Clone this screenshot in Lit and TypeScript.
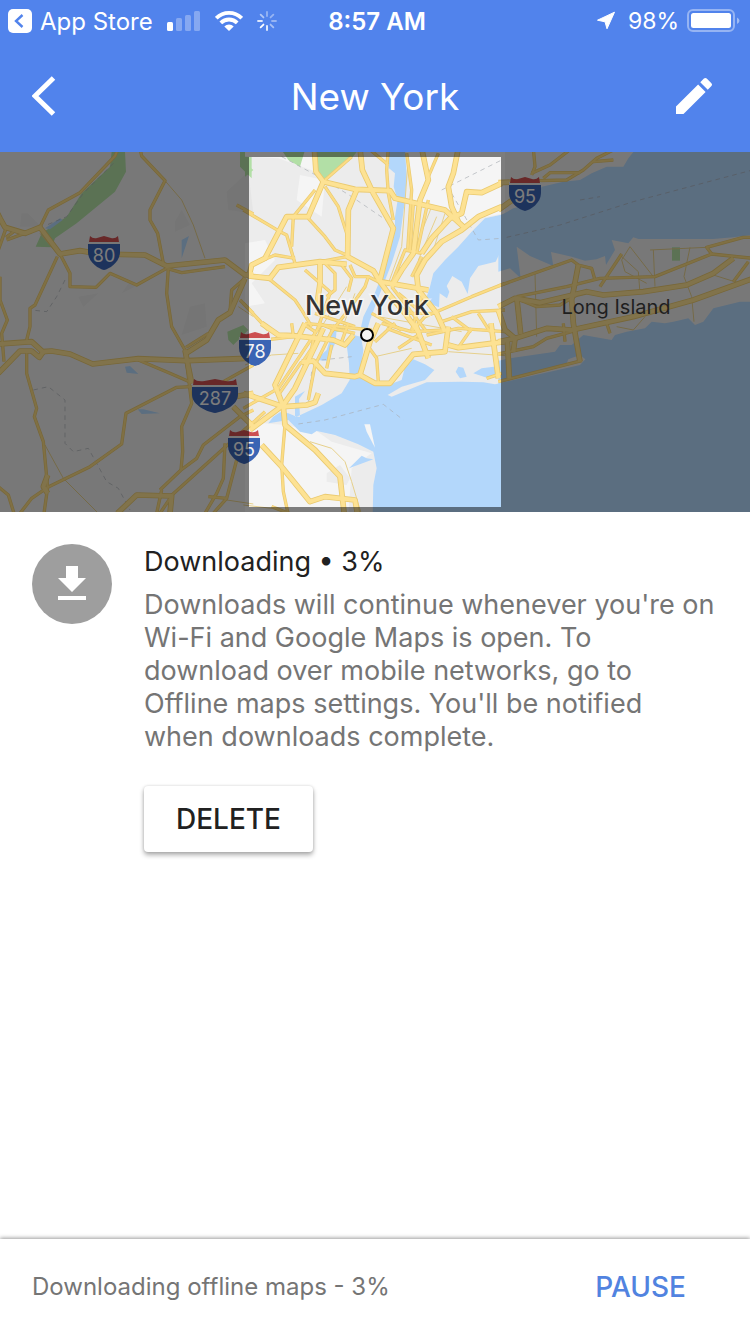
import { LitElement, html, svg, css } from "lit";
import { customElement, property } from "lit/decorators.js";

type Tile = { x: number; y: number; major: string[]; medium: string[]; thin: string[]; dash: string[] };

/* Road lines, grouped by map tile; each tile is drawn at three units per pixel. */
const TILES: Tile[] = [
  {
    x: 0, y: -2,
    major: [
      "-10,185 0,205 15,232 75,250 120,232 180,312 240,302 300,312 435,315 500,348 675,330 735,375 760,372",
      "-5,582 95,575 128,605 155,603 210,612 278,642 415,626 560,632 720,626 760,624",
      "-5,670 60,603 95,603 118,622 130,605",
      "352,1090 410,1035 515,1038 510,1090",
      "735,385 690,488 655,510 620,570 558,610",
      "555,600 575,700", "705,740 760,730", "700,770 760,830", "143,975 130,1010 143,1030",
    ],
    medium: [
      "120,232 145,180 240,128 345,18 355,-5",
      "420,-5 425,18 495,92 450,180 450,210 473,250 490,340",
      "180,312 210,370 210,410 288,412 330,370 410,405 500,355 545,368 675,350",
      "172,320 105,465 90,475 90,530 80,570",
      "505,355 500,430 515,530 555,600 575,760 545,830 548,905 543,960",
      "80,610 80,670 110,775 103,800 130,875 143,1012 132,1090",
      "143,1012 270,950 365,882 378,790 530,712 575,710",
      "415,630 510,670 575,698", "670,695 760,645",
      "480,1020 543,960 590,925 610,885 720,800 760,780",
      "510,1040 760,815", "470,1090 485,1020",
      "60,1090 95,1045 143,1012", "-5,1010 25,1035 42,1090",
      "0,380 0,450 22,510 5,550 12,635", "18,235 -5,300", "20,270 80,248", "18,262 40,246",
      "675,880 670,985 650,1030 615,1090", "710,930 680,1045 640,1090", "625,1040 680,1045",
      "690,485 695,420 735,385", "720,450 760,490", "710,165 760,192", "558,592 625,550", "480,1090 510,1045",
    ],
    thin: ["495,92 545,150 580,225 615,325", "135,885 190,985 295,1090", "680,1050 760,1062", "715,470 760,500", "120,250 170,310"],
    dash: ["195,390 170,440 140,485 95,480", "100,720 145,710 195,750 195,880 220,905 265,895 290,940 320,995 355,1015 390,1080", "340,40 250,130 200,200 140,225"],
  },
  {
    x: 245, y: -2,
    major: [
      "208,-5 213,65 235,95 330,118 435,122 450,145 600,180 655,230",
      "235,95 190,200 125,200 60,325 20,345 12,378 75,385 100,352 225,335 305,343",
      "345,-5 352,60 385,130 445,235 405,390",
      "335,120 310,180 308,320 385,362 405,395 550,420",
      "530,-5 550,90 525,150 505,310 470,360 440,410",
      "770,170 700,200 650,240 590,275 540,330 515,375 520,420 575,490 600,545",
      "770,100 710,128 665,125 650,190 615,205 560,265 530,310",
      "640,-5 625,70 610,110 620,170 640,215",
      "405,395 430,430 480,490 520,545", "225,335 225,400 215,470",
    ],
    medium: [
      "320,20 240,90", "430,-5 425,60 430,130 445,210", "370,-5 430,45", "485,10 500,120 488,300", "505,160 495,300",
      "240,110 280,170 305,250 305,320 225,335", "-5,180 105,245 125,255 150,340", "210,120 145,200 140,290",
      "190,205 240,260 270,300 305,315", "20,345 90,315 150,325", "70,385 150,450 170,480 200,530",
      "240,340 270,370 270,420 245,440", "290,345 320,385 310,425", "180,360 260,430", "315,345 330,380 370,380 360,410 310,480 260,545",
      "780,400 680,440 540,500", "780,480 680,485 590,515", "-5,460 70,540", "580,10 550,80", "530,310 480,300 440,400",
      "500,380 530,320", "370,380 400,395", "540,500 500,545", "480,490 580,490", "530,440 500,540", "440,410 545,545",
      "380,490 470,540", "700,490 735,545", "620,500 680,545", "550,150 515,310", "255,430 215,545",
      "180,520 380,540", "210,490 330,530", "460,430 520,480",
    ],
    thin: ["560,170 500,320", "575,200 520,330", "490,20 470,290 430,400", "600,190 565,300", "400,500 650,545", "305,410 230,530", "330,430 290,540"],
    dash: ["110,20 240,90 320,140 430,215", "590,120 770,30", "620,130 700,270 770,265"],
  },
  {
    x: 245, y: 173,
    major: [
      "50,-5 100,30 145,32 265,45 300,60 325,30",
      "180,-5 90,180 115,245 120,300 210,375 285,455 298,570",
      "-5,205 115,245 185,240 210,232 220,205", "235,10 150,190 115,240 15,315",
      "170,112 205,108 240,145 330,155 345,150 375,50 400,-5",
      "345,150 390,175 435,175 505,88 600,80 610,5", "510,-5 550,100",
      "610,60 640,68 780,50", "738,-5 760,160",
      "50,360 110,425 195,530 240,515 330,525 338,570",
    ],
    medium: [
      "270,0 210,120 190,225", "120,300 110,420 115,500 130,570", "370,65 395,100 400,170", "390,50 450,-5",
      "460,70 520,30", "-5,250 100,190 230,-5", "-5,320 60,260", "140,-5 145,32", "80,545 145,570",
      "145,35 60,45 0,40", "200,70 210,20 180,0", "200,70 170,115", "330,25 260,10 220,-5", "170,110 100,210",
      "410,-5 500,20 600,15", "545,30 640,10 780,20", "425,10 560,60", "640,68 680,10", "245,130 260,60", "725,160 770,145", "310,-5 290,50",
    ],
    thin: ["195,350 260,370 300,410 320,470 350,570", "610,80 780,92", "0,120 80,90 160,85", "390,95 500,70", "-5,540 80,550"],
    dash: ["160,297 240,285 415,238 475,285", "190,230 200,140", "230,105 320,95"],
  },
  {
    x: 500, y: -2,
    major: [
      "-5,470 45,445 120,458 260,425 310,435 430,425 560,405 640,370 700,325",
      "-5,575 45,565 140,535 215,540 400,500 580,450 760,385",
      "235,345 215,450 220,520 240,635", "50,440 62,552", "-5,480 15,540 45,565 40,605", "22,570 28,685", "-5,180 40,148", "-5,98 70,95",
    ],
    medium: [
      "95,70 150,45 215,-5", "100,-5 105,50 95,75", "115,92 200,90 250,60 290,25 350,-5", "130,85 150,68 240,68",
      "-5,408 215,330 235,345 275,355 285,390", "60,450 110,470 180,465 230,435", "50,440 200,410 300,385 465,380 635,312 620,292 730,262 760,262",
      "635,312 760,325", "300,410 365,312", "-5,612 100,590 140,565 215,545", "190,520 195,575", "320,520 330,550",
      "-5,695 245,632", "745,335 700,395", "280,35 340,30",
    ],
    thin: ["390,290 365,330 375,365 440,400", "390,290 460,380", "460,300 465,410", "570,292 552,380 575,440 582,515", "450,300 620,292", "105,370 110,560", "640,375 720,400", "350,530 400,540 435,500", "360,315 415,365 420,430"],
    dash: ["20,262 180,225 400,155 750,62", "240,150 300,140"],
  },
];

const at = (x: number, y: number) => `translate(${x} ${y}) scale(.333333)`;

const roads = (kind: "major" | "medium" | "thin" | "dash", cls: string) =>
  TILES.map((t) => svg`<g class=${cls} transform=${at(t.x, t.y)}>${t[kind].map((p) => svg`<polyline points=${p}></polyline>`)}</g>`);

const shield = (x: number, y: number, label: string, w = 32) => {
  const h = w / 2;
  const q = w / 4;
  return svg`
  <g transform="translate(${x} ${y})">
    <path fill="#e9e9e9" d="M${-h} 5H${h}V9H${-h}Z"></path>
    <path fill="#cc4f50" d="M${-h + 1} 6L${-h + 2} 0Q${-h + 5} 3 ${-q + 1} 2L0 0L${q - 1} 2Q${h - 5} 3 ${h - 2} 0L${h - 1} 6Z"></path>
    <path fill="#3a64b4" d="M${-h} 8H${h}V16C${h} 26 ${w / 6} 33 0 34C${-w / 6} 33 ${-h} 26 ${-h} 16Z"></path>
    <text class="route" x="0" y="26">${label}</text>
  </g>`;
};

@customElement("region-map")
export class RegionMap extends LitElement {
  static styles = css`
    :host { display: block; height: 360px; overflow: hidden; background: #797979; }
    svg { display: block; width: 100%; height: 100%; }
    polyline { fill: none; stroke-linejoin: round; }
    .major-case { stroke: #eaca70; stroke-width: 17; }
    .major { stroke: #fde293; stroke-width: 12; }
    .medium-case { stroke: #eaca70; stroke-width: 10; }
    .medium { stroke: #fbdc85; stroke-width: 6; }
    .thin { stroke: #e6d08c; stroke-width: 3; }
    .dash { stroke: #a9adb3; stroke-width: 2; stroke-dasharray: 14 12; }
    .water { fill: #b3d7fb; }
    .park { fill: #b2dfa6; }
    .pale { fill: #f5f5f5; }
    .grey { fill: #e5e5e5; }
    .land { fill: #ececec; }
    text { font-family: Inter, "Liberation Sans", sans-serif; }
    .route { font-size: 18px; fill: #f4f4f4; text-anchor: middle; }
    .city { font-size: 27px; font-weight: 500; fill: #333; stroke: #fff; stroke-width: 3; stroke-opacity: .55; paint-order: stroke; text-anchor: middle; }
    .area { font-size: 20px; fill: #1f1f1f; text-anchor: middle; }
  `;

  render() {
    return html`<svg viewBox="0 0 750 360" preserveAspectRatio="xMidYMid slice" role="img" aria-label="Map of New York">
      <rect class="land" width="750" height="360"></rect>
      <g transform=${at(0, -2)}>
        <path class="grey" d="M65 190h18l40 40H60zM525 215l20-35 25 45-45 20zM235 440l60-10-45 40zM365 430l25-35 15 15zM570 470l45-10 5 70-75 25zM680 125l65-60 15 125-75-10z"></path>
        <path class="park" d="M335 5H375L378 65 345 125 230 220 165 265 155 292 107 290 125 250 200 200 245 130 330 50ZM720 0H755V85L720 50ZM682 545L730 525 745 540 700 585 685 570Z"></path>
        <path class="water" d="M135 235L180 205 188 210 150 238ZM545 270L567 258 545 325ZM375 650L390 648 415 672 380 668ZM413 778H430L480 790 425 792Z"></path>
      </g>
      <g transform=${at(245, -2)}>
        <path class="pale" d="M165 75L240 90 230 200 155 150ZM0 0H210L213 65 100 25 0 20ZM480 0H780V190L700 205 650 225 600 180 550 165 500 150ZM0 280L60 270 90 330 20 400 60 460 0 470Z"></path>
        <path class="park" d="M215 0H340L320 25 240 92 213 65ZM110 0H180L165 50 130 30ZM0 40L25 60 0 80ZM260 530h30v15h-30z"></path>
        <path class="water" d="M430 0L432 55 450 70 446 110 458 150 450 200 450 240 430 310 405 390 385 440 355 500 345 545H365L375 510 405 430 440 340 465 260 480 150 485 80 480 0ZM790 190L720 205 680 245 640 290 600 330 565 370 555 410 540 455 582 472 584 430 606 445 613 425 605 408 622 378 650 395 668 432 675 385 700 348 752 335 765 308 790 310Z"></path>
      </g>
      <g transform=${at(245, 173)}>
        <path class="pale" d="M0 290L120 300 215 318 270 330 385 380 320 430 310 570H0Z"></path>
        <path class="land" d="M215 318L290 335 385 375 380 385 260 350ZM245 445l40-25 30 40-10 20-60-10z"></path>
        <path class="water" d="M790 170L750 178 715 172 650 170 545 172 440 215 428 210 470 185 540 165 568 135 540 118 505 103 480 125 470 165 430 180 390 180 345 155 355 75 348 35 325 30 305 60 312 115 314 165 290 205 230 240 155 275 130 265 105 262 85 275 70 295 130 285 165 320 200 328 215 318 270 330 340 358 385 380 395 430 385 480 383 570H790ZM262 20L275 10 272 50 258 85 250 108 212 105 245 75ZM640 125L655 128 665 155 645 160 632 140ZM685 145L710 130 790 120V150L730 160ZM150 275L150 215 180 198 162 222 165 275Z"></path>
        <path class="pale" d="M358 298H375L390 368 365 320Z"></path>
        <path class="water" d="M312 430L350 392 365 400 385 403Z"></path>
      </g>
      <g transform=${at(500, -2)}>
        <path class="water" d="M405 0L385 25 370 50 320 50 275 70 240 90 190 95 125 110 100 160 40 175-5 200V365L30 355 62 385 50 290 90 318 160 348 153 306 215 320 255 332 290 328 315 318 318 345 345 300 335 270 385 280 400 262 415 267H640L700 262 755 255V0ZM755 455H720L640 475 610 515 585 525 565 505 520 515 495 520 455 515 435 535 380 545 345 555 335 570 250 555 215 585 180 585 165 605 30 625-5 632V1100H755Z"></path>
        <path class="land" d="M-5 700L200 640 205 628 240 615 256 628 240 645Z"></path>
        <path class="park" d="M516 292H540V332H516Z"></path>
      </g>
      ${roads("dash", "dash")} ${roads("thin", "thin")}
      ${roads("medium", "medium-case")} ${roads("major", "major-case")}
      ${roads("medium", "medium")} ${roads("major", "major")}
      ${shield(104, 84, "80")} ${shield(255, 180, "78")} ${shield(215, 227, "287", 46)}
      ${shield(244, 278, "95")} ${shield(525, 25, "95")}
      <text class="city" x="367" y="163">New York</text>
      <circle cx="367" cy="183" r="6" fill="#f4f4f4" stroke="#000" stroke-width="2"></circle>
      <path fill="#000" fill-opacity=".49" fill-rule="evenodd" d="M-2000 0H3000V360H-2000ZM249 5V355H501V5Z"></path>
      <text class="area" x="616" y="162">Long Island</text>
    </svg>`;
  }
}

@customElement("app-root")
export class AppRoot extends LitElement {
  @property() place = "New York";
  @property({ type: Number }) progress = 3;

  static styles = css`
    :host {
      display: flex; flex-direction: column; min-height: 100vh; background: #fff; color: #212121;
      font-family: Inter, "Liberation Sans", sans-serif;
    }
    header { background: #5183ec; color: #fff; }
    svg { display: block; flex: none; }
    h1, h2, p { margin: 0; font-weight: 400; }
    button { font: inherit; color: inherit; border: 0; background: none; padding: 0; cursor: pointer; }
    .status { display: grid; grid-template-columns: 1fr auto 1fr; align-items: center; box-sizing: border-box; height: 40px; padding: 2px 10px 0 8px; font-size: 24px; }
    .left, .right { display: flex; align-items: center; }
    .right { justify-content: flex-end; gap: 8px; font-size: 23px; }
    .back-app { display: flex; align-items: center; gap: 8px; color: inherit; text-decoration: none; }
    .signal, .wifi, .spinner { margin-left: 14px; }
    .location { margin-right: 4px; }
    .time { padding-left: 6px; font-weight: 600; }
    .bar { display: grid; grid-template-columns: 1fr auto 1fr; align-items: center; height: 112px; padding: 0 32px; }
    .bar h1 { font-size: 37px; }
    .edit { justify-self: end; }
    .content { flex: 1; display: flex; align-items: flex-start; gap: 32px; padding: 32px; }
    .badge { display: grid; place-items: center; flex: none; width: 80px; height: 80px; border-radius: 50%; background: #9e9e9e; }
    .details { flex: 1; }
    .details h2 { font-size: 27px; line-height: 36px; }
    .details p { margin-top: 8px; font-size: 27px; line-height: 33px; color: #757575; }
    .delete { display: block; margin-top: 33px; height: 66px; padding: 0 32px; font-size: 28px; font-weight: 500; border-radius: 4px; background: #fff; box-shadow: 0 3px 5px rgba(0,0,0,.32), 0 0 3px rgba(0,0,0,.14); }
    footer { display: flex; align-items: center; justify-content: space-between; height: 95px; padding: 0 64px 0 32px; box-shadow: 0 -1px 4px rgba(0,0,0,.4); }
    footer p { font-size: 24px; color: #757575; }
    .pause { font-size: 28px; font-weight: 500; color: #5183e0; }
  `;

  render() {
    return html`
      <header>
        <div class="status">
          <div class="left">
            <a class="back-app" href="#">
              <svg width="24" height="24" viewBox="0 0 24 24"><rect width="24" height="24" rx="5" fill="#fff"></rect><path d="M14.500 6L8 12l6.500 6" fill="none" stroke="#5183ec" stroke-width="2.400"></path></svg>
              App Store
            </a>
            <svg class="signal" width="34" height="20" viewBox="0 0 34 20" fill="#fff"><rect y="11" width="6" height="9" rx="1.500"></rect><g opacity=".3"><rect x="9" y="7" width="6" height="13" rx="1.500"></rect><rect x="18" y="4" width="6" height="16" rx="1.500"></rect><rect x="27" width="6" height="20" rx="1.500"></rect></g></svg>
            <svg class="wifi" width="28" height="20" viewBox="0 0 28 20"><g fill="none" stroke="#fff" stroke-width="3.800"><path d="M1.300 7.200a18 18 0 0 1 25.400 0"></path><path d="M5.800 11.900a11.600 11.600 0 0 1 16.400 0"></path></g><path fill="#fff" d="M9.300 15.400a6.700 6.700 0 0 1 9.400 0L14 20z"></path></svg>
            <svg class="spinner" width="20" height="20" viewBox="-10 -10 20 20" stroke="#fff" stroke-width="1.800" stroke-linecap="round">
              ${[0.4, 0.4, 0.4, 0.5, 0.9, 1, 0.8, 0.55].map((o, i) => svg`<path d="M0-5V-9" transform="rotate(${i * 45})" opacity=${o}></path>`)}
            </svg>
          </div>
          <span class="time">8:57 AM</span>
          <div class="right">
            <svg class="location" width="20" height="20" viewBox="0 0 20 20"><path fill="#fff" stroke="#fff" stroke-linejoin="round" d="M18.500 1.200L11 17.800 9 10.800 1.500 9.200Z"></path></svg>
            <span>98%</span>
            <svg width="53" height="24" viewBox="0 0 53 24"><rect x="1" y="1" width="46" height="21" rx="5" fill="none" stroke="#fff" stroke-opacity=".4" stroke-width="2"></rect><rect x="4" y="4" width="40" height="15" rx="2.500" fill="#fff"></rect><path d="M50 8.500q5 3 0 6.500z" fill="#fff" opacity=".45"></path></svg>
          </div>
        </div>
        <div class="bar">
          <button aria-label="Back"><svg width="24" height="40" viewBox="0 0 24 40"><path d="M21.500 2L3 20l18.500 18" fill="none" stroke="#fff" stroke-width="5"></path></svg></button>
          <h1>${this.place}</h1>
          <button class="edit" aria-label="Edit"><svg width="48" height="48" viewBox="0 0 24 24"><path fill="#fff" d="M3 17.250V21h3.750L17.810 9.940l-3.750-3.750L3 17.250zM20.710 7.040a1 1 0 0 0 0-1.410l-2.340-2.340a1 1 0 0 0-1.410 0l-1.830 1.830 3.750 3.750 1.830-1.830z"></path></svg></button>
        </div>
      </header>
      <region-map></region-map>
      <main class="content">
        <div class="badge"><svg width="28" height="36" viewBox="0 0 28 36" fill="#fff"><path d="M8 0H20V12H28L14 26 0 12H8Z"></path><rect y="30" width="28" height="4"></rect></svg></div>
        <section class="details">
          <h2>Downloading • ${this.progress}%</h2>
          <p>Downloads will continue whenever you're on Wi-Fi and Google Maps is open. To download over mobile networks, go to Offline maps settings. You'll be notified when downloads complete.</p>
          <button class="delete">DELETE</button>
        </section>
      </main>
      <footer>
        <p>Downloading offline maps - ${this.progress}%</p>
        <button class="pause">PAUSE</button>
      </footer>
    `;
  }
}
